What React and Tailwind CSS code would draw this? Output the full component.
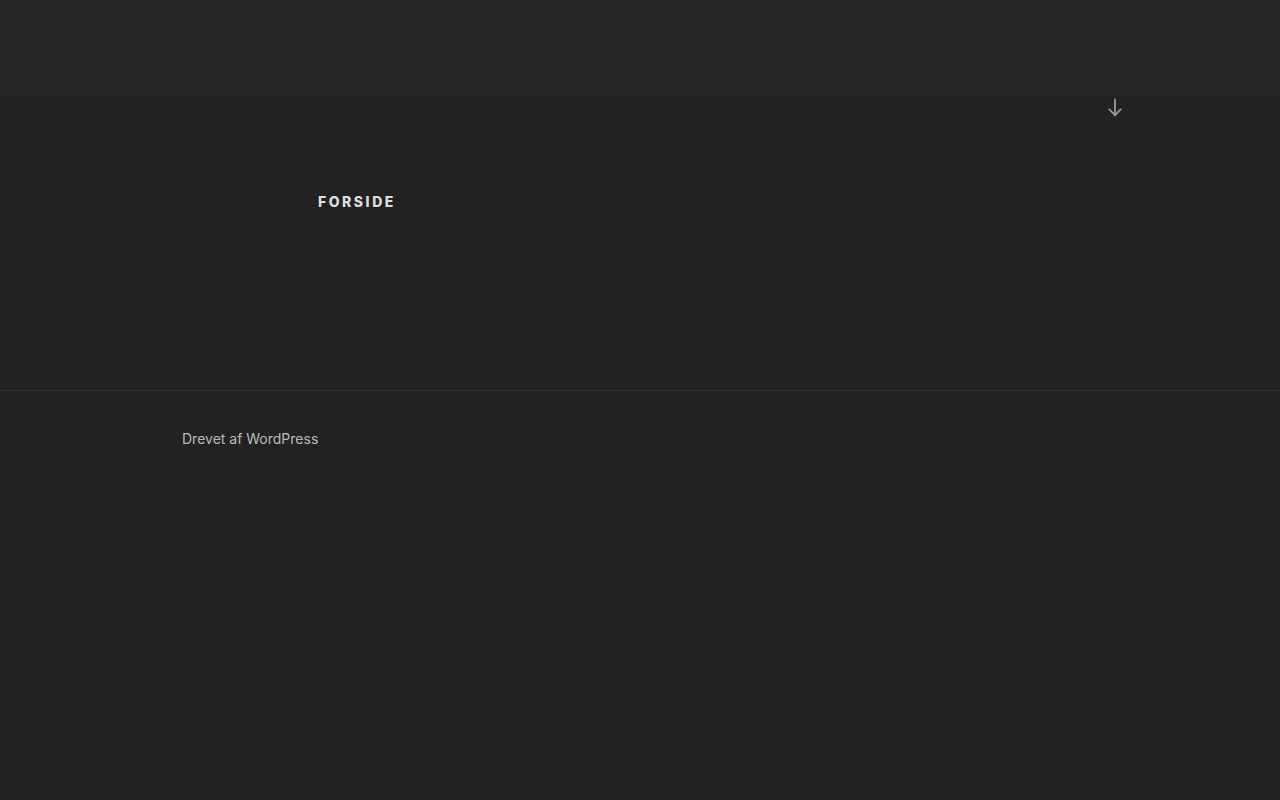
export default function App() {
  return (
    <div className="min-h-[800px] bg-[#222222] flex flex-col" style={{ fontFamily: "Inter, 'Liberation Sans', sans-serif" }}>
      <div className="h-[95px] bg-[#262626]" />
      <div className="relative h-[296px] border-b border-[#333333]">
        <div className="absolute left-[1106px] top-[3px] text-[#999999]">
          <svg width="18" height="20" viewBox="0 0 18 20" fill="none" stroke="currentColor" strokeWidth="1.8" strokeLinecap="square">
            <path d="M9 1.5 V17" />
            <path d="M3.5 11.5 L9 17.2 L14.5 11.5" />
          </svg>
        </div>
        <div className="pl-[318px] pt-[98px]">
          <h2 className="text-[14px] leading-[18px] font-extrabold tracking-[0.18em] uppercase text-[#dddddd]">Forside</h2>
        </div>
      </div>
      <div className="pl-[182px] pt-[39px]">
        <p className="text-[14px] leading-[18px] text-[#bbbbbb]">Drevet af WordPress</p>
      </div>
    </div>
  );
}
